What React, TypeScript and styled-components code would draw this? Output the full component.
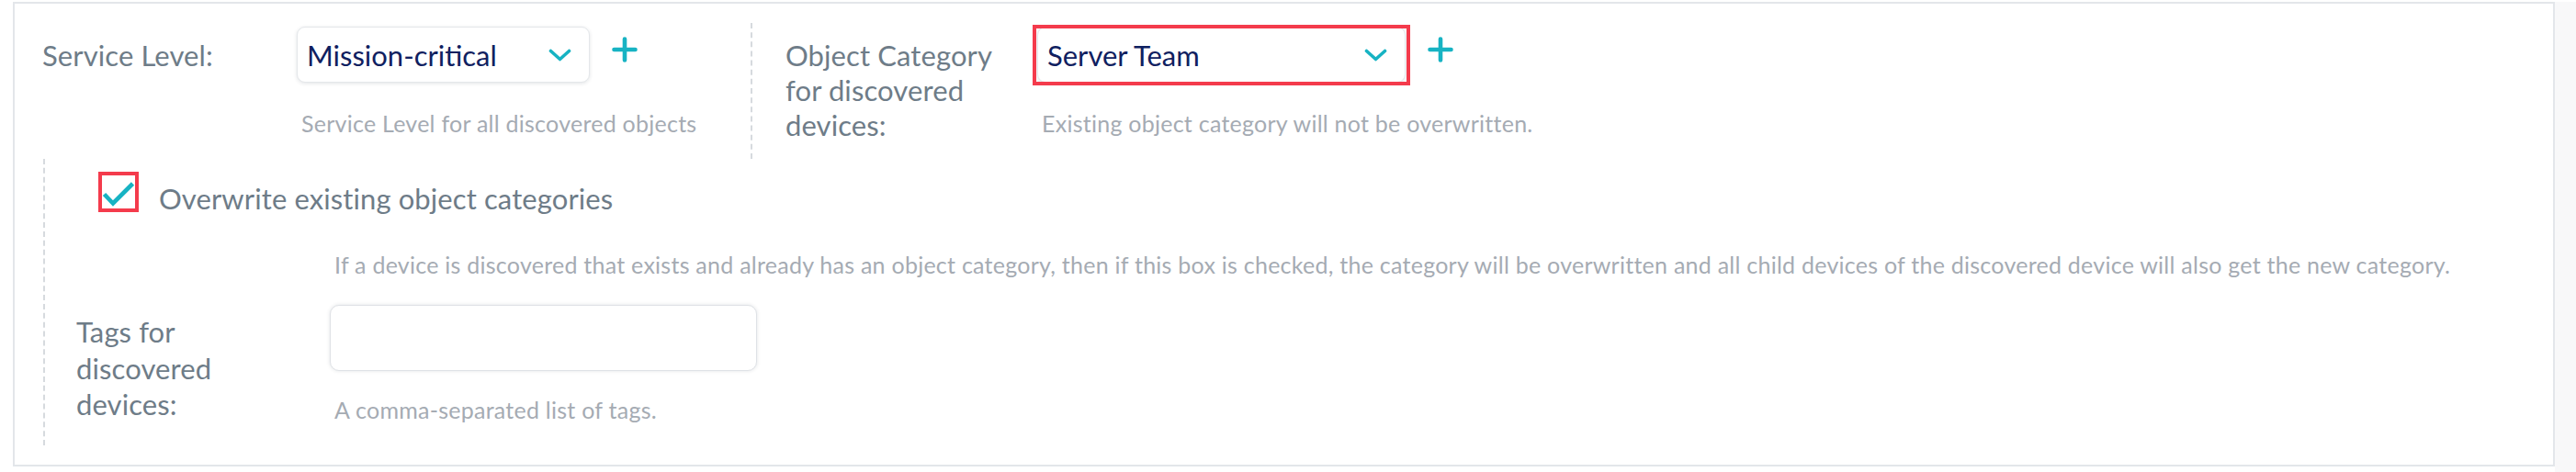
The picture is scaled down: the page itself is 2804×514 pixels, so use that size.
import styled, { createGlobalStyle } from 'styled-components';

const GlobalStyle = createGlobalStyle`
  html, body {
    margin: 0;
    padding: 0;
    background: #ffffff;
  }
  body {
    font-family: Lato, "Open Sans", sans-serif;
  }
`;

const Page = styled.div`
  display: flex;
  width: 2804px;
  height: 514px;
  padding: 2px 0 0 14px;
  box-sizing: border-box;
`;

const Panel = styled.section`
  width: 2767px;
  flex-shrink: 0;
  align-self: flex-start;
  box-sizing: border-box;
  border: 2px solid #e3e6ea;
  padding: 21px 0 21px 0;
  background: #ffffff;
`;

const Gutter = styled.div`
  flex: 1;
  background: #f8f8f9;
`;

const TopRow = styled.div`
  display: flex;
  height: 148px;
`;

const Group = styled.div<{ $divider?: boolean; $width?: number }>`
  display: flex;
  align-items: flex-start;
  box-sizing: border-box;
  padding: 4px 0 0 ${(p) => (p.$divider ? 36 : 30)}px;
  width: ${(p) => (p.$width ? `${p.$width}px` : 'auto')};
  border-left: ${(p) => (p.$divider ? '2px dashed #d6dade' : 'none')};
`;

const Label = styled.div<{ $width: number; $gap?: number; $top?: number; $lh?: number }>`
  width: ${(p) => p.$width}px;
  flex-shrink: 0;
  box-sizing: border-box;
  padding-right: ${(p) => p.$gap ?? 20}px;
  margin-top: ${(p) => p.$top ?? 12}px;
  font-size: 31px;
  letter-spacing: 0.1px;
  line-height: ${(p) => p.$lh ?? 38}px;
  color: #6e7c88;
`;

const Control = styled.div`
  display: flex;
  flex-direction: column;
`;

const SelectRow = styled.div`
  display: flex;
  align-items: flex-start;
  gap: 24px;
`;

const Select = styled.div<{ $width: number; $highlight?: boolean }>`
  position: relative;
  display: flex;
  align-items: center;
  justify-content: space-between;
  box-sizing: border-box;
  width: ${(p) => p.$width}px;
  height: 61px;
  padding: 0 19px 0 10px;
  border: 1.5px solid #e4e7ea;
  border-radius: 9px;
  background: #ffffff;
  box-shadow: 0 1px 4px rgba(20, 30, 50, 0.12);
  font-size: 31px;
  line-height: 36px;
  color: #0f2060;

  ${(p) =>
    p.$highlight &&
    `
    &::after {
      content: '';
      position: absolute;
      inset: -3px -6px -4px -6px;
      border: 4px solid #f43b4c;
      pointer-events: none;
    }
  `}
`;

const PlusButton = styled.button`
  margin-top: 11px;
  padding: 0;
  border: none;
  background: none;
  display: flex;
  cursor: pointer;
`;

const Help = styled.div<{ $top: number; $indent?: number }>`
  margin-top: ${(p) => p.$top}px;
  padding-left: ${(p) => p.$indent ?? 5}px;
  font-size: 25px;
  letter-spacing: 0.25px;
  line-height: 30px;
  color: #a5abb3;
  white-space: nowrap;
`;

const SubSection = styled.div`
  margin-left: 31px;
  border-left: 2px dashed #d6dade;
  padding: 16px 0 24px 0;
`;

const CheckRow = styled.label`
  display: flex;
  align-items: flex-start;
  gap: 24px;
  padding-left: 60px;
  cursor: pointer;
`;

const CheckBox = styled.span`
  position: relative;
  display: flex;
  width: 40px;
  height: 40px;
  box-sizing: border-box;
  border: 2px solid #c9ced4;
  border-radius: 2px;
  background: #ffffff;

  &::after {
    content: '';
    position: absolute;
    inset: -4px;
    border: 4px solid #f43b4c;
    pointer-events: none;
  }
`;

const CheckLabel = styled.span`
  padding-top: 8px;
  font-size: 31px;
  letter-spacing: 0.1px;
  line-height: 38px;
  color: #6e7c88;
`;

const TagsRow = styled.div`
  display: flex;
  align-items: flex-start;
  margin-top: 29px;
  padding-left: 34px;
`;

const TextInput = styled.input`
  width: 465px;
  height: 72px;
  box-sizing: border-box;
  border: 1.5px solid #dfe2e6;
  border-radius: 10px;
  box-shadow: 0 0 4px rgba(20, 30, 50, 0.12);
  outline: none;
  padding: 0 16px;
  font-family: inherit;
  font-size: 28px;
  color: #0f2060;
`;

const Chevron = () => (
  <svg width="25" height="14" viewBox="0 0 25 14" fill="none">
    <path d="M2.5 2.5 L12.5 11.5 L22.5 2.5" stroke="#17b3c3" strokeWidth="3.6" strokeLinecap="round" strokeLinejoin="round" />
  </svg>
);

const Plus = () => (
  <svg width="28" height="28" viewBox="0 0 28 28" fill="none">
    <path d="M14 2.5 V25.5 M2.5 14 H25.5" stroke="#17b3c3" strokeWidth="4.6" strokeLinecap="round" />
  </svg>
);

const Check = () => (
  <svg width="36" height="36" viewBox="0 0 36 36" fill="none">
    <path d="M2.5 20.5 L12 30.5 L33.5 9" stroke="#17b3c3" strokeWidth="4.6" strokeLinejoin="miter" />
  </svg>
);

export default function App() {
  return (
    <>
      <GlobalStyle />
      <Page>
        <Panel>
          <TopRow>
            <Group $width={801}>
              <Label $width={277}>Service Level:</Label>
              <Control>
                <SelectRow>
                  <Select $width={319}>
                    <span>Mission-critical</span>
                    <Chevron />
                  </Select>
                  <PlusButton aria-label="Add service level">
                    <Plus />
                  </PlusButton>
                </SelectRow>
                <Help $top={29}>Service Level for all discovered objects</Help>
              </Control>
            </Group>
            <Group $divider>
              <Label $width={274} $gap={36}>
                Object Category for discovered devices:
              </Label>
              <Control>
                <SelectRow>
                  <Select $width={401} $highlight>
                    <span>Server Team</span>
                    <Chevron />
                  </Select>
                  <PlusButton aria-label="Add object category">
                    <Plus />
                  </PlusButton>
                </SelectRow>
                <Help $top={29}>Existing object category will not be overwritten.</Help>
              </Control>
            </Group>
          </TopRow>

          <SubSection>
            <CheckRow>
              <CheckBox>
                <Check />
              </CheckBox>
              <CheckLabel>Overwrite existing object categories</CheckLabel>
            </CheckRow>
            <Help $top={38} $indent={315}>
              If a device is discovered that exists and already has an object category, then if this box is checked, the
              category will be overwritten and all child devices of the discovered device will also get the new category.
            </Help>
            <TagsRow>
              <Label $width={276} $gap={96} $top={10} $lh={39.5}>
                Tags for discovered devices:
              </Label>
              <Control>
                <TextInput type="text" />
                <Help $top={27}>A comma-separated list of tags.</Help>
              </Control>
            </TagsRow>
          </SubSection>
        </Panel>
        <Gutter />
      </Page>
    </>
  );
}
